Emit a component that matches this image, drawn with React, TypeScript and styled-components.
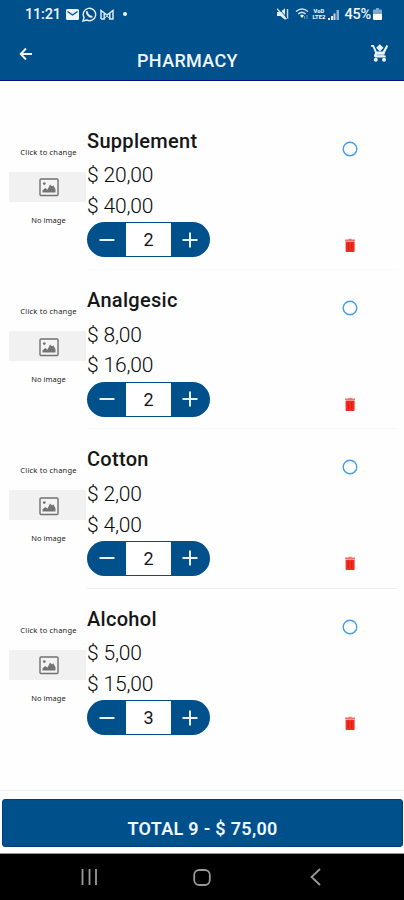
import React from "react";
import styled, { createGlobalStyle } from "styled-components";

const BLUE = "#00508c";

const GlobalStyle = createGlobalStyle`
  * { box-sizing: border-box; }
  body { margin: 0; background: #fefefe; font-family: Roboto, "Liberation Sans", sans-serif; }
  button { font: inherit; border: 0; padding: 0; background: none; color: inherit; display: block; }
  svg { display: block; }
`;

const Screen = styled.div`
  width: 404px;
  height: 900px;
  display: flex;
  flex-direction: column;
  overflow: hidden;
  background: #fefefe;
`;

const Header = styled.header`
  height: 81px;
  flex: none;
  background: ${BLUE};
  border-bottom: 1px solid #00127a;
  color: #f1f6ff;
`;

const StatusBar = styled.div`
  height: 28px;
  display: flex;
  align-items: center;
  justify-content: space-between;
  padding: 0 22px 0 25px;
`;

const StatusGroup = styled.div<{ $gap: number }>`
  display: flex;
  align-items: center;
  gap: ${(p) => p.$gap}px;
`;

const Clock = styled.span`
  width: 38px;
  font-size: 14.5px;
  font-weight: 500;
  letter-spacing: -0.2px;
  white-space: nowrap;
`;

const Battery = styled.span`
  margin-left: 3px;
  font-size: 14.5px;
  font-weight: 500;
  letter-spacing: -0.2px;
`;

const Network = styled.span`
  display: flex;
  flex-direction: column;
  align-items: center;
  width: 15px;
  font-size: 5.8px;
  line-height: 6.5px;
  font-weight: 800;
  letter-spacing: 0;
`;

const AppBar = styled.div`
  height: 52px;
  display: grid;
  grid-template-columns: 60px 1fr 60px;
  padding: 0 2px 0 0;
`;

const BackButton = styled.button`
  height: 16px;
  padding-left: 18px;
  margin-top: 18px;
`;

const CartButton = styled.button`
  height: 20px;
  padding-left: 29px;
  margin-top: 15px;
`;

const Title = styled.h1`
  margin: 22px 0 0 -27px;
  font-size: 18px;
  line-height: 22px;
  font-weight: 500;
  text-align: center;
  letter-spacing: 0.35px;
`;

const List = styled.main`
  flex: 1;
  padding: 29.8px 7px 0 9px;
`;

const Row = styled.article`
  height: 159.3px;
  display: grid;
  grid-template-columns: 78px 1fr 92px;
`;

const Thumb = styled.button`
  display: flex;
  flex-direction: column;
  padding-top: 36px;
`;

const ThumbText = styled.span<{ $gap?: number; $spacing: number }>`
  width: 100%;
  height: 10px;
  padding-left: 1px;
  margin-top: ${(p) => p.$gap ?? 0}px;
  font-family: "Noto Sans", sans-serif;
  font-size: 7.5px;
  line-height: 10px;
  color: #222;
  text-align: center;
  white-space: nowrap;
  letter-spacing: ${(p) => p.$spacing}px;
`;

const ThumbBand = styled.span`
  width: 77px;
  height: 30px;
  margin-top: 15px;
  padding: 2px 0 0 2px;
  display: flex;
  align-items: center;
  justify-content: center;
  background: #f1f1f1;
`;

const Info = styled.div<{ $line: string }>`
  display: flex;
  flex-direction: column;
  align-items: flex-start;
  padding-top: 15px;
  border-bottom: 1px solid ${(p) => p.$line};
`;

const Name = styled.h2`
  margin: 0 0 4.7px;
  font-size: 20px;
  line-height: 30px;
  font-weight: 500;
  letter-spacing: 0.3px;
  color: #161616;
`;

const Price = styled.span`
  font-size: 21px;
  line-height: 30.7px;
  font-weight: 300;
  color: #080808;
  letter-spacing: -0.15px;
`;

const Stepper = styled.div`
  width: 123px;
  height: 35px;
  margin-top: 0.4px;
  display: grid;
  grid-template-columns: 39px 45px 39px;
  border-radius: 18px;
  overflow: hidden;
  background: ${BLUE};
  color: #e8f1fc;
`;

const StepButton = styled.button<{ $shift?: number }>`
  display: flex;
  align-items: center;
  justify-content: center;
  padding-right: ${(p) => p.$shift ?? 0}px;
`;

const Quantity = styled.span`
  margin: 1px 0;
  background: #fff;
  color: #161616;
  font-size: 18px;
  line-height: 33px;
  text-align: center;
`;

const Actions = styled.div<{ $line: string }>`
  display: flex;
  flex-direction: column;
  padding: 30px 0 0 37px;
  gap: 80px;
  border-bottom: 1px solid ${(p) => p.$line};
`;

const IconButton = styled.button`
  height: 16px;
  width: 16px;
`;

const Footer = styled.footer`
  height: 64px;
  flex: none;
  padding: 8px 1px 0 2px;
  border-top: 1px solid #eee;
  border-bottom: 1px solid #999;
`;

const TotalButton = styled.button`
  width: 100%;
  height: 48px;
  padding-top: 11px;
  border-radius: 3px;
  border: 1px solid #003c80;
  background: ${BLUE};
  color: #f1f6ff;
  font-size: 18px;
  font-weight: 600;
  letter-spacing: 0.3px;
  text-align: center;
`;

const NavBar = styled.nav`
  height: 46px;
  flex: none;
  display: grid;
  grid-template-columns: repeat(3, 114px);
  justify-content: center;
  background: #000;
  color: #999;
`;

const NavButton = styled.button<{ $indent?: number }>`
  display: flex;
  align-items: center;
  justify-content: center;
  padding-left: ${(p) => p.$indent ?? 0}px;
`;

const items = [
  { name: "Supplement", price: "$ 20,00", total: "$ 40,00", quantity: 2, line: "#fafafa" },
  { name: "Analgesic", price: "$ 8,00", total: "$ 16,00", quantity: 2, line: "#f7f7f7" },
  { name: "Cotton", price: "$ 2,00", total: "$ 4,00", quantity: 2, line: "#eeeeee" },
  { name: "Alcohol", price: "$ 5,00", total: "$ 15,00", quantity: 3, line: "transparent" },
];

const MailIcon = () => (
  <svg width="13" height="11" viewBox="0 0 13 11">
    <rect width="13" height="11" rx="1.5" fill="#eef4fc" />
    <path d="M1.5 2.5 6.5 6l5-3.5" fill="none" stroke={BLUE} strokeWidth="1.3" />
  </svg>
);

const WhatsAppIcon = () => (
  <svg width="15" height="15" viewBox="0 0 15 15" fill="none" stroke="#e5eefa">
    <path d="m1 14 1-3.6A6.2 6.2 0 1 1 4.7 13Z" strokeWidth="1.4" />
    <path d="M5 4.2c-.5 2.8 2.6 6 5.4 5.6" strokeWidth="2" />
  </svg>
);

const GmailIcon = () => (
  <svg width="14" height="11" viewBox="0 0 14 11" fill="none" stroke="#dce8f7">
    <path d="M1 10V1.5L7 6l6-4.5V10H9.8V4M1 10h3.2V4" strokeWidth="1.5" />
    <path d="m4.2 9.5 2.8-2.5 2.8 2.5" />
  </svg>
);

const MuteIcon = () => (
  <svg width="12" height="12" viewBox="0 0 12 12">
    <path d="M0 4h3.5L8 .3v11.4L3.5 8H0Z" fill="#e3edf8" />
    <path d="M10.5 1v10" stroke="#c9daee" strokeWidth="1.5" />
    <path d="m1.2 0 9.3 10.5" stroke={BLUE} strokeWidth="1" />
    <path d="m0 .7 9.4 10.6" stroke="#e3edf8" strokeWidth="1.3" />
  </svg>
);

const WifiIcon = () => (
  <svg width="14" height="12" viewBox="0 0 14 12" fill="none" stroke="#cfdef0" strokeWidth="1.6">
    <path d="M1 3.5Q7-1.5 13 3.5M3.2 6Q7 2.8 10.5 6" />
    <path d="m5 7.6 2-1 2 1-2 2.4Z" fill="#fff" stroke="none" />
    <path d="M9.5 8v3M12 7v4" strokeWidth="1" strokeOpacity=".5" />
  </svg>
);

const SignalIcon = () => (
  <svg width="11" height="11" viewBox="0 0 11 11">
    <path d="M0 9h2v2H0ZM3 7h2v4H3Z" fill="#e2ecf8" />
    <path d="M5.5 4.5h2V11h-2Z" fill="#c6d7ea" />
    <path d="M8.5 1H11v10H8.5Z" fill="#8fb0cf" />
  </svg>
);

const BatteryIcon = () => (
  <svg width="9" height="12" viewBox="0 0 9 12">
    <path d="M3 0h3v1.5h2q1 0 1 1V6H0V2.5q0-1 1-1h2Z" fill="#7fa9cb" />
    <path d="M0 6h9v5q0 1-1 1H1q-1 0-1-1Z" fill="#fff" />
  </svg>
);

const BackIcon = () => (
  <svg width="16" height="16" viewBox="0 0 16 16" fill="none" stroke="#f1f6ff" strokeWidth="1.9">
    <path d="M14 8H3M8 2.5 2.7 8 8 13.5" />
  </svg>
);

const CartIcon = () => (
  <svg width="18" height="20" viewBox="0 0 18 20" fill="#e8f1fc">
    <path d="M0 2h2.8l3 6.5h6L15.4 2l1.8 1-4 8H6.2l-.8 1.5h9.3v2H4.2q-2-1-1-3l1-1.6L1.6 3.8H0Z" />
    <path d="M8.8 1.2 12.5 4.8 8.9 8.4 5.2 4.8Z" />
    <path d="M4 9.5h10l-1 4H4Z" opacity=".75" />
    <circle cx="4.8" cy="16.8" r="2" />
    <circle cx="13" cy="16.8" r="2" />
  </svg>
);

const PictureIcon = () => (
  <svg width="20" height="19" viewBox="0 0 20 19">
    <rect x="1" y="1" width="18" height="16.5" rx="1" fill="#f4f4f4" stroke="#707070" strokeWidth="1.4" />
    <circle cx="5.3" cy="5.6" r="1.4" fill="#777" />
    <path d="M3.5 14.5v-2.3L6.5 10l2 1.8L11 6.5l2 2 1.3-1.3 2.2 4v3.3Z" fill="#737373" />
  </svg>
);

const CircleIcon = () => (
  <svg width="16" height="16" viewBox="0 0 16 16">
    <circle cx="8" cy="8" r="6.8" fill="#fff" stroke="#409eed" strokeWidth="1.4" />
  </svg>
);

const TrashIcon = () => (
  <svg width="16" height="16" viewBox="0 0 16 16">
    <path d="M3 2.6h3.2l.8-.9h2.2l.8.9h3v1.5H3Z" fill="#e5786c" />
    <path d="M3.6 4.5h9V14q0 1-1 1h-7q-1 0-1-1Z" fill="#f32b20" />
    <path d="M6.5 6v7M9.7 6v7" stroke="#d31c12" strokeWidth=".9" />
  </svg>
);

const MinusIcon = () => (
  <svg width="16" height="16" viewBox="0 0 16 16" stroke="currentColor" strokeWidth="2">
    <path d="M.5 8h15" />
  </svg>
);

const PlusIcon = () => (
  <svg width="16" height="16" viewBox="0 0 16 16" stroke="currentColor" strokeWidth="2">
    <path d="M.5 8h15M8 .5v15" />
  </svg>
);

export default function App() {
  return (
    <Screen>
      <GlobalStyle />
      <Header>
        <StatusBar>
          <StatusGroup $gap={3}>
            <Clock>11:21</Clock>
            <StatusGroup $gap={3}>
              <MailIcon />
              <WhatsAppIcon />
              <GmailIcon />
            </StatusGroup>
            <svg width="20" height="6" viewBox="0 0 20 6">
              <circle cx="8" cy="3" r="2" fill="#eef4fc" />
            </svg>
          </StatusGroup>
          <StatusGroup $gap={2}>
            <MuteIcon />
            <StatusGroup $gap={3}>
              <svg width="1" height="1" />
              <WifiIcon />
            </StatusGroup>
            <Network>
              <span>VoD</span>
              <span>LTE2</span>
            </Network>
            <SignalIcon />
            <Battery>45%</Battery>
            <BatteryIcon />
          </StatusGroup>
        </StatusBar>
        <AppBar>
          <BackButton aria-label="Back">
            <BackIcon />
          </BackButton>
          <Title>PHARMACY</Title>
          <CartButton aria-label="Cart">
            <CartIcon />
          </CartButton>
        </AppBar>
      </Header>
      <List>
        {items.map((item) => (
          <Row key={item.name}>
            <Thumb>
              <ThumbText $spacing={0.2}>Click to change</ThumbText>
              <ThumbBand>
                <PictureIcon />
              </ThumbBand>
              <ThumbText $gap={13} $spacing={0.05}>
                No image
              </ThumbText>
            </Thumb>
            <Info $line={item.line}>
              <Name>{item.name}</Name>
              <Price>{item.price}</Price>
              <Price>{item.total}</Price>
              <Stepper>
                <StepButton aria-label="Decrease">
                  <MinusIcon />
                </StepButton>
                <Quantity>{item.quantity}</Quantity>
                <StepButton $shift={1} aria-label="Increase">
                  <PlusIcon />
                </StepButton>
              </Stepper>
            </Info>
            <Actions $line={item.line}>
              <IconButton aria-label="Select">
                <CircleIcon />
              </IconButton>
              <IconButton aria-label="Delete">
                <TrashIcon />
              </IconButton>
            </Actions>
          </Row>
        ))}
      </List>
      <Footer>
        <TotalButton>TOTAL 9 - $ 75,00</TotalButton>
      </Footer>
      <NavBar>
        <NavButton $indent={2} aria-label="Recent apps">
          <svg width="17" height="16" viewBox="0 0 17 16" stroke="currentColor" strokeWidth="1.8">
            <path d="M1.5 0v16M8.5 0v16M15 0v16" />
          </svg>
        </NavButton>
        <NavButton aria-label="Home">
          <svg width="18" height="17" viewBox="0 0 18 17" fill="none" stroke="currentColor" strokeWidth="1.8">
            <rect x="1.2" y="1" width="15.6" height="15" rx="5" />
          </svg>
        </NavButton>
        <NavButton aria-label="Back">
          <svg width="18" height="18" viewBox="0 0 18 18" fill="none" stroke="currentColor" strokeWidth="1.8">
            <path d="m13 1-8.5 8 8.5 8" />
          </svg>
        </NavButton>
      </NavBar>
    </Screen>
  );
}
